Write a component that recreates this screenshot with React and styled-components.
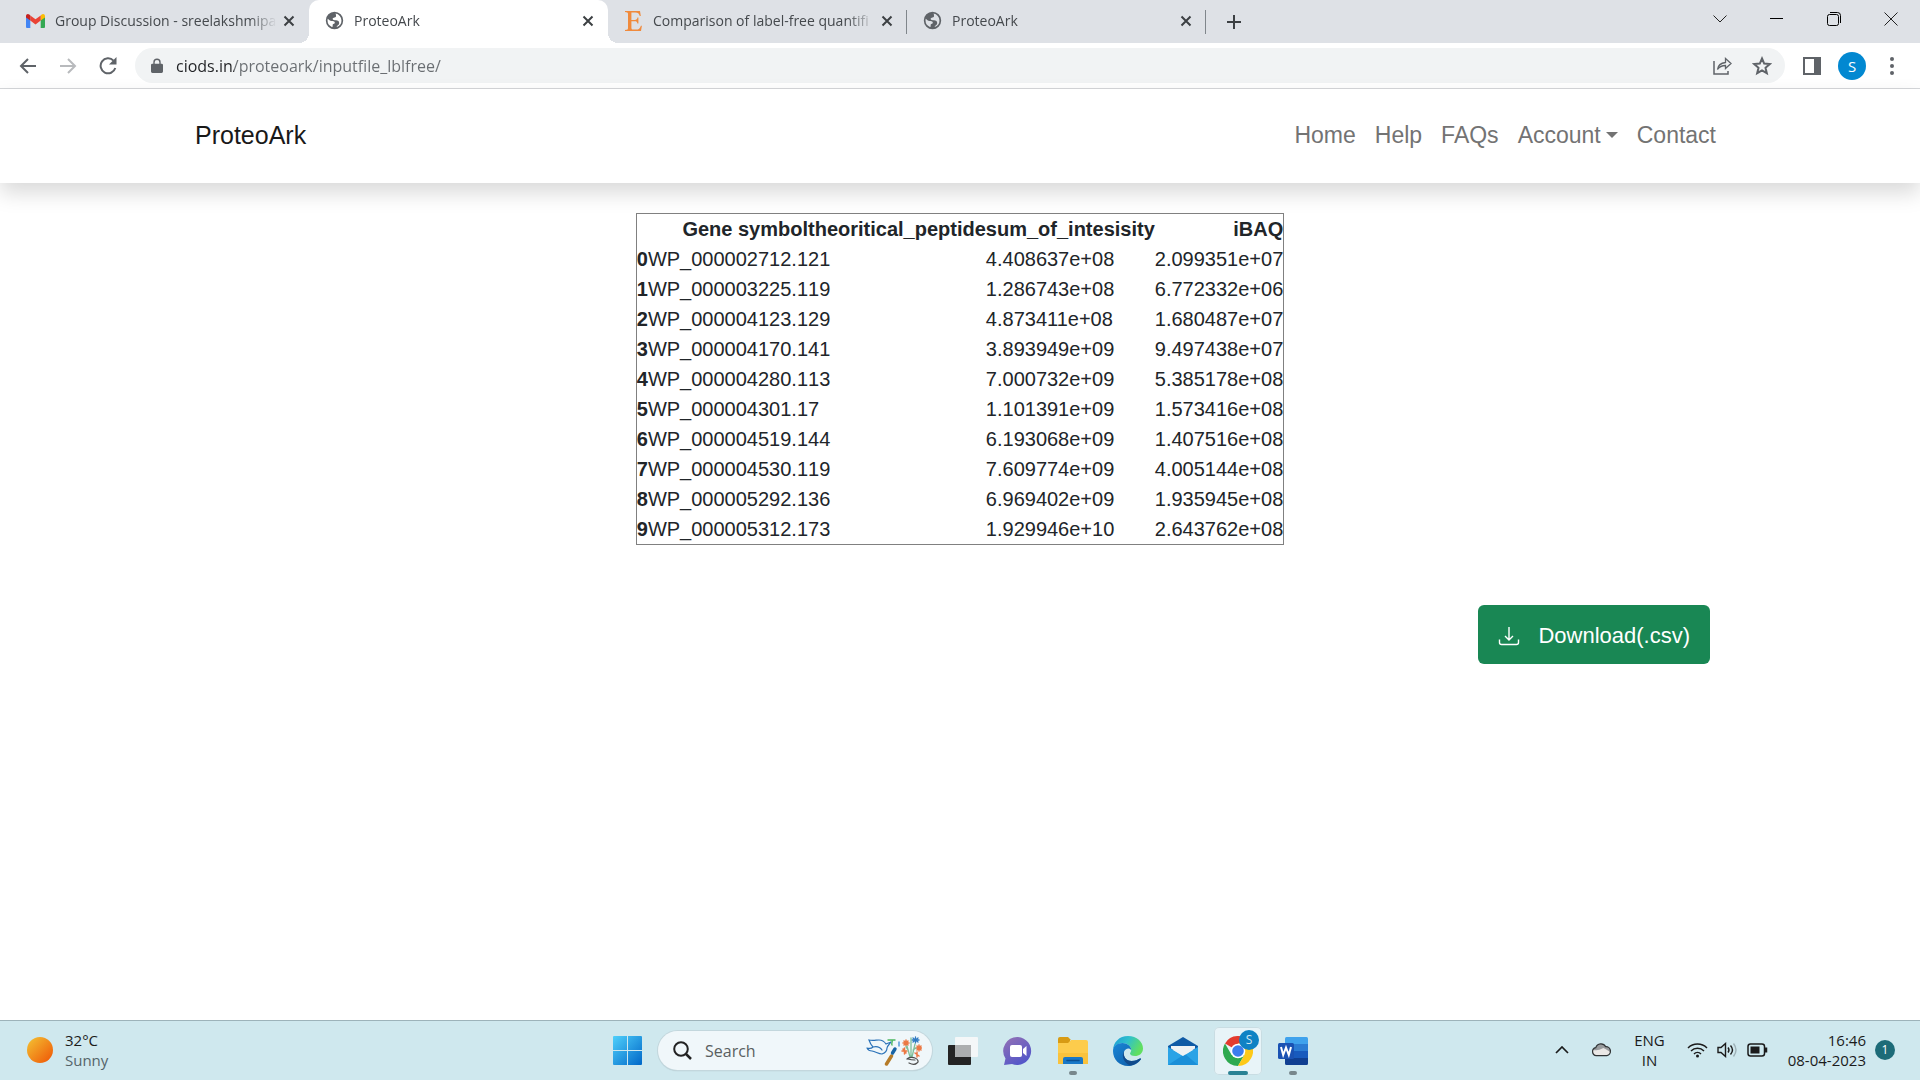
import React from "react";
import styled, { createGlobalStyle } from "styled-components";

const uiFont = `"Open Sans", "Noto Sans", sans-serif`;
const pageFont = `"Liberation Sans", Arial, sans-serif`;

const GlobalStyle = createGlobalStyle`
  *, *::before, *::after { box-sizing: border-box; }
  body { margin: 0; background: #fff; font-family: ${pageFont}; color: #212529; }
  button, input { font: inherit; color: inherit; border: 0; background: none; padding: 0; margin: 0; }
  svg { display: block; flex: none; }
`;

const Screen = styled.div`
  min-height: 100vh;
  display: flex;
  flex-direction: column;
`;

/* ---------- browser window ---------- */

const TabStrip = styled.div`
  display: flex;
  align-items: stretch;
  height: 43px;
  padding-left: 10px;
  background: #dee1e6;
  font-family: ${uiFont};
`;

const Tab = styled.div`
  position: relative;
  flex: 0 1 299px;
  min-width: 0;
  display: flex;
  align-items: center;
  padding: 0 8px 2px 16px;
  border-radius: 10px 10px 0 0;
  background: ${(p) => (p.$active ? "#fff" : "transparent")};
  ${(p) =>
    p.$active &&
    `
    &::before, &::after {
      content: "";
      position: absolute;
      bottom: 0;
      width: 10px;
      height: 10px;
    }
    &::before { right: 100%; background: radial-gradient(circle at 0 0, transparent 10px, #fff 10px); }
    &::after { left: 100%; background: radial-gradient(circle at 100% 0, transparent 10px, #fff 10px); }
  `}
  ${(p) =>
    p.$divided &&
    `
    &::after {
      content: "";
      position: absolute;
      right: 0;
      top: 10px;
      width: 1px;
      height: 24px;
      background: #80868b;
    }
  `}
`;

const TabLabel = styled.button`
  flex: 1;
  min-width: 0;
  display: flex;
  align-items: center;
  gap: 10px;
  height: 100%;
  text-align: left;
`;

const TabTitle = styled.span`
  flex: 1;
  min-width: 0;
  white-space: nowrap;
  font-size: 14px;
  line-height: 20px;
  color: #45494d;
  mask-image: linear-gradient(to right, #000 calc(100% - 28px), transparent);
`;

const IconButton = styled.button`
  display: flex;
  align-items: center;
  justify-content: center;
  flex: none;
  width: ${(p) => p.$w || 40}px;
  height: ${(p) => p.$h || 34}px;
  color: ${(p) => p.$color || "#5f6368"};
`;

const NewTab = styled(IconButton)`
  align-self: center;
  margin-left: 8px;
`;

const WindowControls = styled.div`
  display: flex;
  margin-left: auto;
  padding-right: 1px;
`;

const Toolbar = styled.div`
  display: flex;
  align-items: center;
  height: 46px;
  padding: 0 8px;
  background: #fff;
  border-bottom: 1px solid #d5d7da;
  font-family: ${uiFont};
`;

const AddressBar = styled.form`
  flex: 1;
  display: flex;
  align-items: center;
  height: 35px;
  margin: 0 7px;
  padding: 0 3px 0 16px;
  border-radius: 18px;
  background: #f1f3f4;
`;

const Address = styled.input`
  flex: 1;
  min-width: 0;
  height: 30px;
  margin-left: 13px;
  outline: 0;
  font-size: 16px;
  -webkit-text-fill-color: transparent;
  background: linear-gradient(to right, #202124 58px, #6a6e72 58px);
  -webkit-background-clip: text;
  background-clip: text;
`;

const Avatar = styled.span`
  display: flex;
  align-items: center;
  justify-content: center;
  width: 28px;
  height: 28px;
  border-radius: 50%;
  background: #0288d1;
  color: #fff;
  font-size: 15px;
`;

/* ---------- site ---------- */

const SiteHeader = styled.header`
  background: #fff;
  box-shadow: 0 10px 20px rgba(0, 0, 0, 0.15);
`;

const Container = styled.div`
  max-width: 1530px;
  margin: 0 auto;
`;

const Navbar = styled(Container)`
  display: flex;
  align-items: center;
  justify-content: space-between;
  height: 94px;
  padding-bottom: 2px;
`;

const Brand = styled.a`
  font-size: 25px;
  line-height: 38px;
  color: #191919;
  text-decoration: none;
`;

const NavList = styled.nav`
  display: flex;
  gap: 19px;
  padding-right: 9px;
`;

const NavLink = styled.a`
  display: flex;
  align-items: center;
  font-size: 23px;
  line-height: 34px;
  color: #737373;
  text-decoration: none;
`;

const Caret = styled.span`
  margin-left: 5px;
  border: 6px solid transparent;
  border-top-color: currentColor;
  border-bottom: 0;
`;

const Main = styled.main`
  flex: 1;
  padding-top: 30px;
`;

const ResultTable = styled.table`
  margin: 0 auto;
  border: 1px solid #808080;
  border-spacing: 0;
  font-size: 20px;
  line-height: 30px;
  color: #212529;
  th, td { padding: 0; }
  td { text-align: left; }
  th { text-align: right; font-weight: 700; }
`;

const Actions = styled(Container)`
  display: flex;
  justify-content: flex-end;
  padding: 60px 15px 30px;
`;

const DownloadButton = styled.button`
  display: flex;
  align-items: center;
  gap: 18px;
  height: 59px;
  padding: 2px 20px 0;
  border-radius: 6px;
  background: #198754;
  color: #fff;
  font-size: 22px;
  line-height: 34px;
`;

/* ---------- taskbar ---------- */

const Taskbar = styled.footer`
  display: grid;
  grid-template-columns: 1fr auto 1fr;
  align-items: center;
  height: 60px;
  border-top: 1px solid #9db3ba;
  background: #cfe8ee;
  font-family: ${uiFont};
  font-size: 15px;
  line-height: 20px;
  color: #1b1b1b;
`;

const Weather = styled.button`
  display: flex;
  align-items: center;
  gap: 12px;
  justify-self: start;
  padding: 0 0 2px 27px;
  text-align: left;
`;

const Sun = styled.span`
  width: 26px;
  height: 26px;
  border-radius: 50%;
  background: linear-gradient(135deg, #f3b92f 10%, #f0640c 85%);
`;

const Lines = styled.span`
  display: flex;
  flex-direction: column;
  text-align: ${(p) => p.$align || "left"};
`;

const Muted = styled.span`
  color: #55646a;
`;

const Dock = styled.div`
  display: flex;
  align-items: center;
  gap: 7px;
`;

const AppButton = styled.button`
  position: relative;
  display: flex;
  align-items: center;
  justify-content: center;
  width: 48px;
  height: 48px;
  border-radius: 5px;
  background: ${(p) => (p.$active ? "#e8f4f8" : "transparent")};
  box-shadow: ${(p) => (p.$active ? "0 0 0 1px #c9dde3 inset" : "none")};
`;

const Indicator = styled.span`
  position: absolute;
  bottom: 0;
  left: 50%;
  width: ${(p) => (p.$active ? 20 : 8)}px;
  height: 4px;
  margin-left: ${(p) => (p.$active ? -10 : -4)}px;
  border-radius: 2px;
  background: ${(p) => (p.$active ? "#2a8294" : "#78878c")};
`;

const Badge = styled.span`
  position: absolute;
  top: 3px;
  right: 3px;
  width: 20px;
  height: 20px;
  border-radius: 50%;
  background: #0f82c4;
  color: #cfe8f5;
  font-size: 12px;
  line-height: 20px;
  text-align: center;
`;

const SearchBox = styled.label`
  display: flex;
  align-items: center;
  gap: 13px;
  width: 274px;
  height: 39px;
  padding: 0 10px 0 15px;
  border-radius: 20px;
  background: #f0f7fa;
  box-shadow: 0 0 0 1px #c3d7dd, 0 1px 1px #9fb1b7;
`;

const SearchInput = styled.input`
  flex: 1;
  min-width: 0;
  outline: 0;
  font-size: 16px;
  &::placeholder { color: #5a5f61; opacity: 1; }
`;

const Tray = styled.div`
  display: flex;
  align-items: center;
  justify-self: end;
  padding: 0 25px 2px 0;
`;

const TrayButton = styled.button`
  display: flex;
  align-items: center;
  justify-content: center;
  gap: 9px;
  margin-right: ${(p) => p.$after || 0}px;
`;

const Notice = styled.span`
  display: flex;
  align-items: center;
  justify-content: center;
  width: 20px;
  height: 20px;
  border-radius: 50%;
  background: #1d6b78;
  color: #fff;
  font-size: 12px;
`;

/* ---------- drawings ---------- */

const Gmail = () => (
  <svg width="19" height="14" viewBox="0 0 19 14">
    <path d="M0 2.2V13a1 1 0 0 0 1 1h3.3V5.4z" fill="#4285f4" />
    <path d="M19 2.2V13a1 1 0 0 1-1 1h-3.3V5.4z" fill="#34a853" />
    <path d="M14.7 1.4v5.2L19 3.4V2c0-1.8-2-2.6-3.3-1.4z" fill="#fbbc04" />
    <path d="M4.3 6.6V1.4l5.2 3.9 5.2-3.9v5.2l-5.2 3.9z" fill="#ea4335" />
    <path d="M0 2v1.4l4.3 3.2V1.4L3.3.6C2-.6 0 .2 0 2z" fill="#c5221f" />
  </svg>
);

const Globe = () => (
  <svg width="19" height="19" viewBox="0 0 24 24" fill="#5f6368">
    <path d="M12 1a11 11 0 1 0 0 22 11 11 0 0 0 0-22zM3.2 12c0-.8.1-1.500.3-2.200 1.600 1.300 2.800 2.700 4.700 2.900 1.800.2 3.600.1 4.100 1.500.4 1.200-.7 1.900-1.800 2.300-1 .4-.8 1.500-.8 2.400 0 .9-.3 1.300-.9 1.200A8.900 8.900 0 0 1 3.200 12zm11.700 8.300c-.2-.9.4-1.700 1.400-2.300 1.400-.9 1.900-2.400 1.500-3.900-.5-1.800-2-2.100-3.700-2.300-2-.2-4.300-.2-4.400-1.700-.1-1.300 1.100-1.600 2.300-1.800 1.400-.2 2-1 1.900-2.300 0-.9-.1-1.800-.6-2.700A8.800 8.800 0 0 1 20.800 12a8.800 8.800 0 0 1-5.900 8.300z" />
  </svg>
);

const SerifE = () => (
  <svg width="19" height="20" viewBox="0 0 19 20" fill="#f08a3c">
    <path d="M1 0h15l.8 5h-1C15 2.500 14 1.400 11.500 1.400H7.400v7.500h3.400c1.800 0 2.300-.6 2.600-2.400h1v6.100h-1c-.3-1.900-.9-2.400-2.600-2.400H7.400v6.500c0 1.300.5 1.900 1.900 1.900h3c2.500 0 3.600-1.100 4.600-3.900h1L17 20H1v-1l1.300-.2c1.300-.2 1.700-.6 1.700-1.900V3.100c0-1.300-.4-1.700-1.700-1.900L1 1z" />
  </svg>
);

const Stroke = ({ w = 20, h = 20, sw = 2, children, ...rest }) => (
  <svg width={w} height={h} viewBox={`0 0 ${w} ${h}`} fill="none" stroke="currentColor" strokeWidth={sw} {...rest}>
    {children}
  </svg>
);

const Cross = () => (
  <Stroke w={12} h={12}>
    <path d="M1.500 1.500l9 9M10.500 1.500l-9 9" />
  </Stroke>
);

const Lock = () => (
  <svg width="12" height="15" viewBox="0 0 13 16" fill="#5f6368">
    <path d="M1.500 6h1V4.500a4 4 0 0 1 8 0V6h1A1.500 1.500 0 0 1 13 7.500v7a1.500 1.500 0 0 1-1.500 1.500h-10A1.500 1.500 0 0 1 0 14.500v-7A1.500 1.500 0 0 1 1.500 6zm2.500 0h5V4.500a2.500 2.500 0 0 0-5 0z" />
  </svg>
);

const Doodle = () => (
  <svg width="56" height="30" viewBox="0 0 56 30" fill="none" strokeLinecap="round">
    <path d="M1 12c3 1 5 0 6-1-2-2-3-4-4-7 4 1 7 0 10 0 3 0 5 1 7 4 2-1 3-1 5-2M1 12c1 2 3 3 5 3 4 1 7 3 10 3 3-1 5-3 5-6 0-2 2-3 4-6M7 11c4-1 7 0 9 3" stroke="#2a72b8" strokeWidth="1.200" />
    <path d="M22 4h7M26 4c1 2-1 3 0 5" stroke="#4cb860" strokeWidth="1.400" />
    <path d="M20.500 28l5-8" stroke="#b57b28" strokeWidth="3.400" />
    <path d="M26.500 17l2.500-4" stroke="#1764a5" strokeWidth="3.400" />
    <path d="M33 6v4" stroke="#4a94d6" strokeWidth="1.400" />
    <g stroke="#ec7843" strokeWidth="1.500">
      <path d="M37 7h6M40 4v6M38 5l4 4M42 5l-4 4M36 15h5M38.500 12v6M37 13l3 4M50 12h6M53 9v6M51 10l4 4M55 10l-4 4M49 17l4 3M51 16v5" />
    </g>
    <path d="M46 4h7M49.500 1v6M47 2l5 4M52 2l-5 4" stroke="#2f7ac2" strokeWidth="1.300" />
    <path d="M41 10l3 11M45 2l0 19M49 8l-3 13M42 14l-2-3M47 14l3-2" stroke="#7fbf9a" strokeWidth="1.300" />
    <path d="M41 23c2-2 6-2 8-1 3 1 4 4 2 5-2 2-6 1-8 0M42 23c3 1 5 1 7 1" stroke="#4d4d4d" strokeWidth="1.200" />
  </svg>
);

const StartIcon = () => (
  <svg width="29" height="29" viewBox="0 0 29 29">
    <defs>
      <linearGradient id="win" x1="0" y1="0" x2="1" y2="1" gradientUnits="objectBoundingBox">
        <stop offset="0" stopColor="#4fd0fb" />
        <stop offset="1" stopColor="#0067c8" />
      </linearGradient>
    </defs>
    <path d="M1 0h13v14H0V1a1 1 0 0 1 1-1zM15 0h13a1 1 0 0 1 1 1v13H15zM0 15h14v14H1a1 1 0 0 1-1-1zM15 15h14v13a1 1 0 0 1-1 1H15z" fill="url(#win)" />
  </svg>
);

const TaskViewIcon = () => (
  <svg width="30" height="28" viewBox="0 0 30 28">
    <rect x="0" y="8" width="23" height="20" rx="1" fill="#242424" />
    <rect x="7" y="0" width="23" height="20" rx="1" fill="#f4f7f8" />
    <path d="M7 8h16v12H8a1 1 0 0 1-1-1z" fill="#acaeaf" />
  </svg>
);

const ChatIcon = () => (
  <svg width="30" height="30" viewBox="0 0 30 30">
    <defs>
      <linearGradient id="chat" x1="0" y1="0" x2="0.600" y2="1">
        <stop offset="0" stopColor="#9572b4" />
        <stop offset="1" stopColor="#5356c9" />
      </linearGradient>
    </defs>
    <path d="M15 1a14 14 0 1 1-6 27L1 29l1.500-6.500A14 14 0 0 1 15 1z" fill="url(#chat)" />
    <rect x="7" y="9" width="12" height="12" rx="2" fill="#fff" />
    <path d="M20 13l3.500-3v10L20 17z" fill="#fff" />
  </svg>
);

const FolderIcon = () => (
  <svg width="30" height="28" viewBox="0 0 30 28">
    <path d="M0 2a2 2 0 0 1 2-2h8l3 3h-1v4H0z" fill="#d89b14" />
    <path d="M0 6h10l3-3h15a2 2 0 0 1 2 2v22H0z" fill="#fdcc4c" />
    <path d="M0 16h30v11H0z" fill="#f9c23c" />
    <path d="M5 27v-5a2 2 0 0 1 2-2h16a2 2 0 0 1 2 2v5z" fill="#1878c8" />
    <path d="M9 23.500h12" stroke="#0b4f91" strokeWidth="1.500" strokeLinecap="round" />
  </svg>
);

const EdgeIcon = () => (
  <svg width="30" height="30" viewBox="0 0 30 30">
    <defs>
      <linearGradient id="edgeTop" x1="0" y1="0" x2="1" y2="0.400">
        <stop offset="0" stopColor="#1c9ad8" />
        <stop offset="0.500" stopColor="#2fc0cc" />
        <stop offset="1" stopColor="#61df61" />
      </linearGradient>
      <linearGradient id="edgeLow" x1="0" y1="0" x2="1" y2="1">
        <stop offset="0" stopColor="#1a86d6" />
        <stop offset="1" stopColor="#0c59a4" />
      </linearGradient>
    </defs>
    <path d="M0 15C0 6 6.500 0 15 0c9 0 15 6 15 12.500 0 5-4 7.500-8 7.500-3.500 0-5-1.500-5-2.500 0-.8 1.200-1.300 1.200-3.500C18.200 10 14 7 9.500 7 4 7 0 11 0 15z" fill="url(#edgeTop)" />
    <path d="M0 15c0-5 4-8 9.500-8 4.500 0 8.700 3 8.700 7-2-3-6.200-1.500-7.200 2-1.300 4.500 2 9 7.500 9 4 0 6.500-1.500 8.500-2.500.8-.4 1.200.3.700 1C25 27.500 20.500 30 15 30 6.500 30 0 23.500 0 15z" fill="url(#edgeLow)" />
    <path d="M11 15c-3 5 0 13 7 14.500 4-1 7.300-3 9.700-6 .5-.7.100-1.400-.7-1-2 1-4.500 2.500-8.500 2.500-5.500 0-8.800-5-7.500-10z" fill="#114a8b" />
  </svg>
);

const MailIcon = () => (
  <svg width="30" height="28" viewBox="0 0 30 28">
    <path d="M0 9L15 0l15 9v4H0z" fill="#0f5aa5" />
    <path d="M0 10l15 9L30 10v18H0z" fill="#2aa3e6" />
    <path d="M0 28L17 17l13 11z" fill="#1a8fd8" />
    <path d="M3 9h24v2.500L15 19 3 11.500z" fill="#eef2f4" />
  </svg>
);

const ChromeIcon = () => (
  <svg width="30" height="30" viewBox="0 0 30 30">
    <path d="M15 15L2 7.500A15 15 0 0 1 28 7.500H15z" fill="#e33b2e" />
    <path d="M15 15l6.500 3.750L15 30A15 15 0 0 1 2 7.500l6.500 11.250z" fill="#2da94f" />
    <path d="M15 7.500h13A15 15 0 0 1 15 30l6.500-11.250z" fill="#fdc918" />
    <circle cx="15" cy="15" r="7.300" fill="#fff" />
    <circle cx="15" cy="15" r="5.800" fill="#3b7ded" />
  </svg>
);

const WordIcon = () => (
  <svg width="30" height="28" viewBox="0 0 30 28">
    <path d="M7 7V1.500A1.500 1.500 0 0 1 8.500 0h20A1.500 1.500 0 0 1 30 1.500V7z" fill="#3fa2ec" />
    <path d="M7 7h23v7H7z" fill="#2b7cd3" />
    <path d="M7 14h23v7H7z" fill="#185abd" />
    <path d="M7 21h23v5.500a1.500 1.500 0 0 1-1.500 1.500h-20A1.500 1.500 0 0 1 7 26.500z" fill="#103f91" />
    <rect x="0" y="6" width="16" height="16" rx="1.500" fill="#1a52b3" />
    <path d="M3 10l2.200 8L8 10.500 10.800 18 13 10" fill="none" stroke="#fff" strokeWidth="2" />
  </svg>
);

const CloudIcon = () => (
  <svg width="21" height="15" viewBox="0 0 22 16">
    <path d="M5.500 14.500a4.300 4.300 0 0 1-.6-8.500A5.800 5.800 0 0 1 15.500 5a4.800 4.800 0 0 1 1.200 9.500z" fill="#9a9c9e" />
    <path d="M5.500 14.500A4.300 4.300 0 0 1 2 8.500C6 9 8 9 13 6.500c3 1.500 6 3 7.500 5a4.500 4.500 0 0 1-3.800 3z" fill="#ebe8e6" />
    <path d="M5.500 14.500a4.300 4.300 0 0 1-.6-8.500A5.800 5.800 0 0 1 15.500 5a4.800 4.800 0 0 1 1.200 9.500z" fill="none" stroke="#303335" strokeWidth="1.300" />
  </svg>
);

/* ---------- data ---------- */

const tabs = [
  { title: "Group Discussion - sreelakshmipa", icon: <Gmail /> },
  { title: "ProteoArk", icon: <Globe />, active: true },
  { title: "Comparison of label-free quantifi", icon: <SerifE />, divided: true },
  { title: "ProteoArk", icon: <Globe />, divided: true },
];

const rows = [
  ["WP_000002712.1", 21, "4.408637e+08", "2.099351e+07"],
  ["WP_000003225.1", 19, "1.286743e+08", "6.772332e+06"],
  ["WP_000004123.1", 29, "4.873411e+08", "1.680487e+07"],
  ["WP_000004170.1", 41, "3.893949e+09", "9.497438e+07"],
  ["WP_000004280.1", 13, "7.000732e+09", "5.385178e+08"],
  ["WP_000004301.1", 7, "1.101391e+09", "1.573416e+08"],
  ["WP_000004519.1", 44, "6.193068e+09", "1.407516e+08"],
  ["WP_000004530.1", 19, "7.609774e+09", "4.005144e+08"],
  ["WP_000005292.1", 36, "6.969402e+09", "1.935945e+08"],
  ["WP_000005312.1", 73, "1.929946e+10", "2.643762e+08"],
];

const apps = [
  { name: "Task view", icon: <TaskViewIcon /> },
  { name: "Chat", icon: <ChatIcon /> },
  { name: "File Explorer", icon: <FolderIcon />, open: true },
  { name: "Edge", icon: <EdgeIcon /> },
  { name: "Mail", icon: <MailIcon /> },
  { name: "Chrome", icon: <ChromeIcon />, open: true, active: true, badge: "S" },
  { name: "Word", icon: <WordIcon />, open: true },
];

export default function App() {
  return (
    <Screen>
      <GlobalStyle />
      <TabStrip>
        {tabs.map((t, i) => (
          <Tab key={i} $active={t.active} $divided={t.divided}>
            <TabLabel>
              {t.icon}
              <TabTitle>{t.title}</TabTitle>
            </TabLabel>
            <IconButton $w={24} $h={24} $color="#3c4043" aria-label="Close tab">
              <Cross />
            </IconButton>
          </Tab>
        ))}
        <NewTab $color="#3c4043" aria-label="New tab">
          <Stroke w={16} h={16}><path d="M8 1v14M1 8h14" /></Stroke>
        </NewTab>
        <WindowControls>
          <IconButton $w={57} $h={37} $color="#222" aria-label="Search tabs">
            <Stroke w={14} h={8} sw={1}><path d="M.5.5L7 7 13.500.5" /></Stroke>
          </IconButton>
          <IconButton $w={57} $h={37} $color="#000" aria-label="Minimize">
            <Stroke w={13} h={1}><path d="M0 .5h13" /></Stroke>
          </IconButton>
          <IconButton $w={57} $h={37} $color="#000" aria-label="Restore">
            <Stroke w={14} h={14} sw={1}>
              <rect x=".5" y="2.500" width="11" height="11" rx="2" />
              <path d="M3 .5h7.500a3 3 0 0 1 3 3V11" />
            </Stroke>
          </IconButton>
          <IconButton $w={57} $h={37} $color="#222" aria-label="Close">
            <Stroke w={14} h={14} sw={1}><path d="M.5.5l13 13M13.500.5l-13 13" /></Stroke>
          </IconButton>
        </WindowControls>
      </TabStrip>

      <Toolbar>
        <IconButton aria-label="Back">
          <Stroke w={18} h={16}><path d="M17 8H2M9 1L2 8l7 7" /></Stroke>
        </IconButton>
        <IconButton $color="#b8babd" aria-label="Forward">
          <Stroke w={18} h={16}><path d="M1 8h15M9 1l7 7-7 7" /></Stroke>
        </IconButton>
        <IconButton aria-label="Reload">
          <Stroke w={18} h={18}>
            <path d="M14.500 3.600A7.500 7.500 0 1 0 16.300 11" />
            <path d="M17.500 0v7.500H10z" fill="currentColor" stroke="none" />
          </Stroke>
        </IconButton>
        <AddressBar onSubmit={(e) => e.preventDefault()}>
          <Lock />
          <Address aria-label="Address" defaultValue="ciods.in/proteoark/inputfile_lblfree/" />
          <IconButton type="button" aria-label="Share">
            <Stroke w={19} h={18} sw={1}>
              <path d="M1 4v13h14v-3" strokeWidth="1.500" />
              <path d="M4.500 12.500C5 8.500 7.500 6 12.500 5.500V1.500l5.500 5-5.500 5V8.500c-3.500 0-6 1-8 4z" strokeWidth="1.300" />
            </Stroke>
          </IconButton>
          <IconButton type="button" aria-label="Bookmark">
            <Stroke w={20} h={20} sw={2}>
              <path d="M10 2.500l2.200 5.100 5.500.5-4.200 3.700 1.300 5.400L10 14.300l-4.800 2.900 1.300-5.400L2.300 8.100l5.500-.5z" />
            </Stroke>
          </IconButton>
        </AddressBar>
        <IconButton aria-label="Side panel">
          <Stroke w={18} h={18}>
            <path d="M1 1h16v16H1z" />
            <path d="M11 1h6v16h-6z" fill="currentColor" stroke="none" />
          </Stroke>
        </IconButton>
        <IconButton aria-label="Profile"><Avatar>S</Avatar></IconButton>
        <IconButton aria-label="Menu">
          <svg width="4" height="18" viewBox="0 0 4 18" fill="currentColor">
            <circle cx="2" cy="2" r="2" /><circle cx="2" cy="9" r="2" /><circle cx="2" cy="16" r="2" />
          </svg>
        </IconButton>
      </Toolbar>

      <SiteHeader>
        <Navbar>
          <Brand href="#">ProteoArk</Brand>
          <NavList>
            <NavLink href="#">Home</NavLink>
            <NavLink href="#">Help</NavLink>
            <NavLink href="#">FAQs</NavLink>
            <NavLink href="#">Account<Caret /></NavLink>
            <NavLink href="#">Contact</NavLink>
          </NavList>
        </Navbar>
      </SiteHeader>

      <Main>
        <ResultTable>
          <thead>
            <tr>
              <th />
              <th>Gene symbol</th>
              <th>theoritical_peptide</th>
              <th>sum_of_intesisity</th>
              <th>iBAQ</th>
            </tr>
          </thead>
          <tbody>
            {rows.map((r, i) => (
              <tr key={i}>
                <th>{i}</th>
                {r.map((c, j) => <td key={j}>{c}</td>)}
              </tr>
            ))}
          </tbody>
        </ResultTable>
        <Actions>
          <DownloadButton>
            <Stroke w={22} h={20} sw={1}>
              <path d="M1.500 13.500v3a2 2 0 0 0 2 2h15a2 2 0 0 0 2-2v-3M11 1v13M7 10l4 4 4-4" strokeWidth="1.400" />
            </Stroke>
            Download(.csv)
          </DownloadButton>
        </Actions>
      </Main>

      <Taskbar>
        <Weather>
          <Sun />
          <Lines>
            <span>32°C</span>
            <Muted>Sunny</Muted>
          </Lines>
        </Weather>
        <Dock>
          <AppButton aria-label="Start"><StartIcon /></AppButton>
          <SearchBox>
            <Stroke w={19} h={19} style={{ color: "#222" }}>
              <circle cx="8" cy="8" r="6.800" /><path d="M13 13l5 5" strokeWidth="2.500" />
            </Stroke>
            <SearchInput aria-label="Search" placeholder="Search" />
            <Doodle />
          </SearchBox>
          {apps.map((a) => (
            <AppButton key={a.name} aria-label={a.name} $active={a.active}>
              {a.icon}
              {a.badge && <Badge>{a.badge}</Badge>}
              {a.open && <Indicator $active={a.active} />}
            </AppButton>
          ))}
        </Dock>
        <Tray>
          <TrayButton $after={22} aria-label="Hidden icons">
            <Stroke w={14} h={8}><path d="M1 7l6-6 6 6" strokeWidth="1.700" /></Stroke>
          </TrayButton>
          <TrayButton $after={22} aria-label="OneDrive"><CloudIcon /></TrayButton>
          <TrayButton $after={22}>
            <Lines $align="center"><span>ENG</span><span>IN</span></Lines>
          </TrayButton>
          <TrayButton $after={20} aria-label="Network, sound, battery">
            <Stroke w={21} h={16}>
              <path d="M1 6a13.400 13.400 0 0 1 19 0M4 9a9.200 9.200 0 0 1 13 0M7 12a5 5 0 0 1 7 0" strokeWidth="1.500" />
              <circle cx="10.500" cy="14" r="1.500" fill="currentColor" stroke="none" />
            </Stroke>
            <Stroke w={21} h={16}>
              <path d="M1 5.500h3L8.500 1.500v13L4 10.500H1z" strokeWidth="1.400" />
              <path d="M11 5.500q2 2.500 0 5M13.500 3.500q4 4.500 0 9" strokeWidth="1.400" />
              <path d="M16.500 1.500q5 6.500 0 13" stroke="#9fb2b8" strokeWidth="1.400" />
            </Stroke>
            <Stroke w={21} h={14}>
              <rect x="1" y="1" width="16.500" height="12" rx="2.500" strokeWidth="1.500" />
              <rect x="3.500" y="3.500" width="9" height="7" fill="currentColor" stroke="none" />
              <path d="M19 4.500v5" strokeWidth="2.500" />
            </Stroke>
          </TrayButton>
          <TrayButton aria-label="Clock and notifications">
            <Lines $align="right"><span>16:46</span><span>08-04-2023</span></Lines>
            <Notice>1</Notice>
          </TrayButton>
        </Tray>
      </Taskbar>
    </Screen>
  );
}
